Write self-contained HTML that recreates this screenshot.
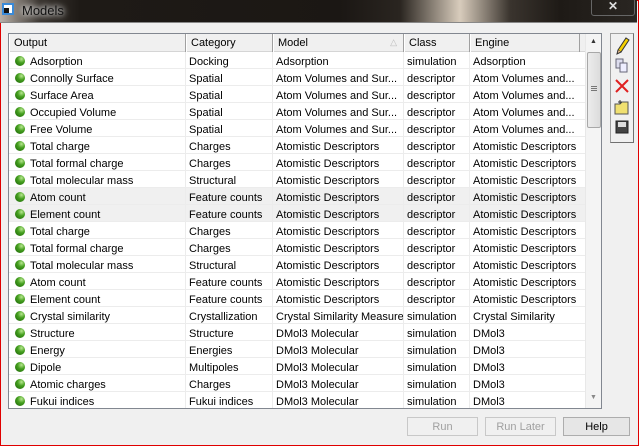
<!DOCTYPE html>
<html><head><style>
*{margin:0;padding:0;box-sizing:border-box}
body{width:639px;height:446px;overflow:hidden;background:#f0f0f0;font-family:"Liberation Sans",sans-serif;font-size:11px;color:#000;position:relative}
.win{position:absolute;left:0;top:0;width:639px;height:446px;border:1px solid #e00000;}
.title{position:absolute;left:0;top:0;width:637px;height:23px;background:linear-gradient(90deg,#b8b0a8 0,#3a3530 40px,#1e1a16 80px,#1b1714 340px,#2a2520 400px,#d8ccbc 460px,#3a342e 510px,#1e1a16 560px,#2a2622 637px);border-bottom:1px solid #888}
.title span{position:absolute;left:22px;top:3px;font-size:13px;color:#111;text-shadow:0 0 6px #fff,0 0 8px #ddd}
.ico{position:absolute;left:2px;top:3px;width:12px;height:12px;border:2px solid #3a8ad8;background:#fff}
.ico:after{content:"";position:absolute;left:0;bottom:0;width:5px;height:5px;background:#111}
.x{position:absolute;right:2px;top:-2px;width:44px;height:18px;border:1px solid #666;border-radius:3px;color:#ddd;text-align:center;font-weight:bold;font-size:12px}
.list{position:absolute;left:8px;top:33px;width:594px;height:376px;border:1px solid #828790;background:#fff;overflow:hidden}
.hdr{position:absolute;left:0;top:0;height:18px;width:592px;background:#f0f0f0;border-bottom:1px solid #d5d5d5}
.hdr div{position:absolute;top:0;height:18px;border-right:1px solid #a0a0a0;border-left:1px solid #fff;padding:3px 0 0 4px;font-size:11px}
.row{position:absolute;left:0;height:17px;width:576px;border-bottom:1px solid #ececec}
.row div{position:absolute;top:0;height:17px;padding:4px 0 0 3px;border-right:1px solid #ececec;white-space:nowrap;overflow:hidden}
.g{display:inline-block;width:10px;height:10px;border-radius:50%;background:radial-gradient(circle at 65% 30%,#b8e890 0,#46a020 40%,#1e6a08 90%);vertical-align:-1px;margin:0 5px 0 3px}
.sb{position:absolute;left:576px;top:0;width:17px;height:374px;background:#f4f4f4;border-left:1px solid #e8e8e8}
.thumb{position:absolute;left:1px;top:18px;width:14px;height:76px;background:linear-gradient(90deg,#ececec,#dcdcdc);border:1px solid #a8a8a8;border-radius:2px}
.tb{position:absolute;left:610px;top:33px;width:24px;height:110px;border:1px solid #a0a0a0;border-right-color:#707070;border-bottom-color:#707070;background:#f0f0f0}
.btn{position:absolute;top:417px;height:19px;border:1px solid #adadad;background:#e6e6e6;text-align:center;padding-top:3px;font-size:11px}
.dis{color:#a0a0a0;border-color:#c8c8c8;background:#f0f0f0}
</style></head><body>
<div class="win"></div>
<div class="title"><div class="ico"></div><span>Models</span><div class="x">✕</div></div>
<div class="list">
<div class="hdr">
<div style="left:0;width:177px">Output</div>
<div style="left:177px;width:87px">Category</div>
<div style="left:264px;width:131px">Model<span style="position:absolute;right:6px;top:3px;color:#bbb;font-size:9px">△</span></div>
<div style="left:395px;width:66px">Class</div>
<div style="left:461px;width:110px">Engine</div>
</div>
<div id="rows"></div>
<div class="sb"><div style="position:absolute;left:4px;top:4px;font-size:7px;color:#333">▲</div><div class="thumb"><div style="position:absolute;left:3px;top:33px;width:6px;height:5px;border-top:1px solid #777;border-bottom:1px solid #777"></div><div style="position:absolute;left:3px;top:35px;width:6px;border-top:1px solid #777"></div></div><div style="position:absolute;left:4px;top:360px;font-size:7px;color:#888">▼</div></div>
</div>
<div class="tb">
<svg width="22" height="108" viewBox="0 0 22 108">
<path d="M7 16 L15 4 L18 6 L10 18 Z" fill="#f4d000" stroke="#333" stroke-width="1"/><path d="M7 16 L6 20 L10 18" fill="#f0c090" stroke="#333"/>
<rect x="5" y="25" width="7" height="9" fill="#dde" stroke="#667"/><rect x="9" y="29" width="7" height="9" fill="#eef" stroke="#667"/>
<path d="M5 46 L17 58 M17 46 L5 58" stroke="#e02020" stroke-width="2"/>
<path d="M4 70 h5 l2 -2 h6 v12 h-13 z" fill="#f0e070" stroke="#555"/><path d="M9 66 v4 M7 68 h4" stroke="#333"/>
<rect x="5" y="87" width="12" height="12" fill="#444" stroke="#222"/><rect x="7" y="88" width="8" height="5" fill="#ddd"/>
</svg></div>
<div class="btn dis" style="left:407px;width:71px">Run</div>
<div class="btn dis" style="left:485px;width:71px">Run Later</div>
<div class="btn" style="left:563px;width:67px">Help</div>
<script>
var d=[["Adsorption","Docking","Adsorption","simulation","Adsorption"],
["Connolly Surface","Spatial","Atom Volumes and Sur...","descriptor","Atom Volumes and..."],
["Surface Area","Spatial","Atom Volumes and Sur...","descriptor","Atom Volumes and..."],
["Occupied Volume","Spatial","Atom Volumes and Sur...","descriptor","Atom Volumes and..."],
["Free Volume","Spatial","Atom Volumes and Sur...","descriptor","Atom Volumes and..."],
["Total charge","Charges","Atomistic Descriptors","descriptor","Atomistic Descriptors"],
["Total formal charge","Charges","Atomistic Descriptors","descriptor","Atomistic Descriptors"],
["Total molecular mass","Structural","Atomistic Descriptors","descriptor","Atomistic Descriptors"],
["Atom count","Feature counts","Atomistic Descriptors","descriptor","Atomistic Descriptors"],
["Element count","Feature counts","Atomistic Descriptors","descriptor","Atomistic Descriptors"],
["Total charge","Charges","Atomistic Descriptors","descriptor","Atomistic Descriptors"],
["Total formal charge","Charges","Atomistic Descriptors","descriptor","Atomistic Descriptors"],
["Total molecular mass","Structural","Atomistic Descriptors","descriptor","Atomistic Descriptors"],
["Atom count","Feature counts","Atomistic Descriptors","descriptor","Atomistic Descriptors"],
["Element count","Feature counts","Atomistic Descriptors","descriptor","Atomistic Descriptors"],
["Crystal similarity","Crystallization","Crystal Similarity Measure","simulation","Crystal Similarity"],
["Structure","Structure","DMol3 Molecular","simulation","DMol3"],
["Energy","Energies","DMol3 Molecular","simulation","DMol3"],
["Dipole","Multipoles","DMol3 Molecular","simulation","DMol3"],
["Atomic charges","Charges","DMol3 Molecular","simulation","DMol3"],
["Fukui indices","Fukui indices","DMol3 Molecular","simulation","DMol3"]];
var L=[0,177,264,395,461],W=[177,87,131,66,115],h="";
d.forEach(function(r,i){h+='<div class="row" style="top:'+(18+i*17)+'px;'+((i==8||i==9)?'background:#f0f0f0':'')+'">';
r.forEach(function(c,j){h+='<div style="left:'+L[j]+'px;width:'+W[j]+'px'+(j==4?';border-right:none':'')+'">'+(j==0?'<span class="g"></span>':'')+c+'</div>'});h+='</div>'});
document.getElementById('rows').innerHTML=h;
</script>
</body></html>
